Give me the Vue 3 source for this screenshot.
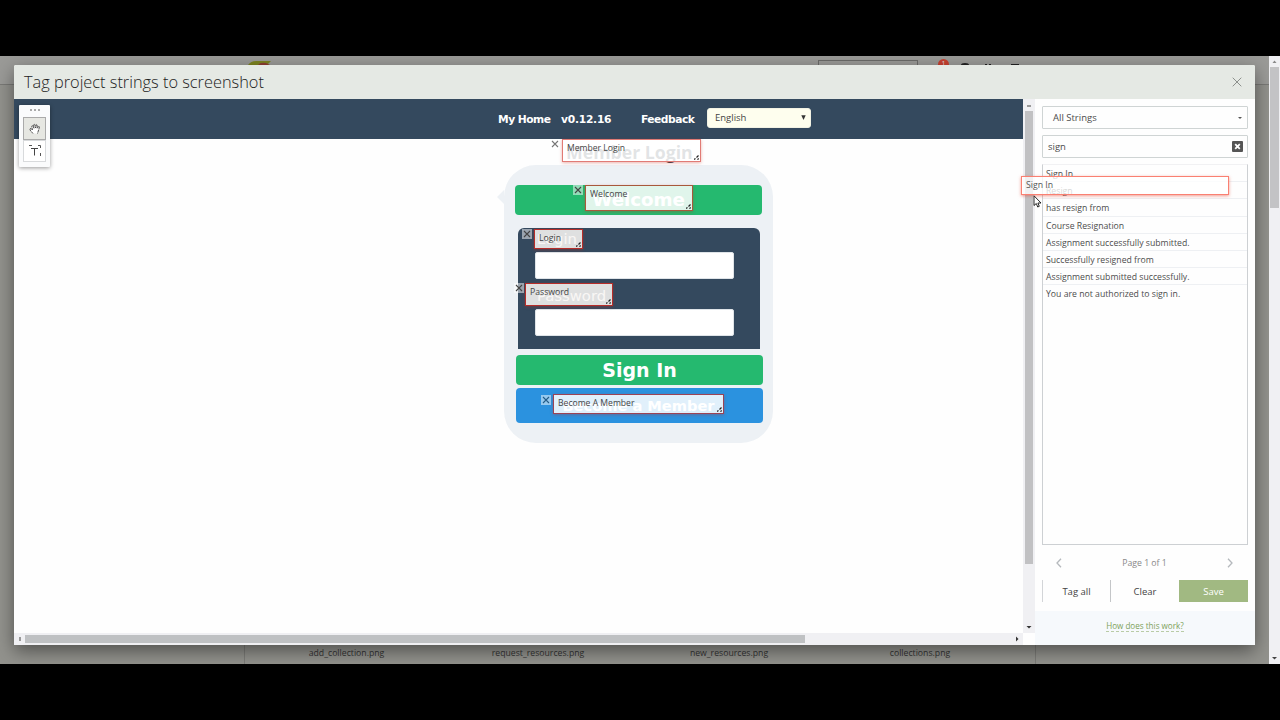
<script setup>
const strings = [
  'Sign In',
  'Resign',
  'has resign from',
  'Course Resignation',
  'Assignment successfully submitted.',
  'Successfully resigned from',
  'Assignment submitted successfully.',
  'You are not authorized to sign in.'
]
const files = ['add_collection.png', 'request_resources.png', 'new_resources.png', 'collections.png']
const tags = [
  { id: 'member', label: 'Member Login' },
  { id: 'welcome', label: 'Welcome' },
  { id: 'login', label: 'Login' },
  { id: 'password', label: 'Password' },
  { id: 'become', label: 'Become A Member' }
]
</script>

<template>
  <div class="screen">
    <div class="page">
      <div class="backdrop">
        <div class="topbar">
          <svg class="logo" width="26" height="9" viewBox="0 0 26 9"><path d="M1 9 Q4 5 9 5H24L20 9Z" fill="#7d8420" /><path d="M11 9 Q13 6 19 7L23 9Z" fill="#8e3c32" /></svg>
          <div class="search"></div>
          <div class="badge">1</div>
          <svg class="glyphs" width="62" height="9" viewBox="0 0 62 9"><path d="M3 9Q3 7 7 7T11 9ZM27 9V8H29V9ZM31 9V8H33V9ZM53 9V8H61V9Z" fill="#222" /></svg>
        </div>
        <div class="files"><span v-for="f in files" :key="f">{{ f }}</span></div>
      </div>
      <div class="page-scroll">
        <svg width="11" height="11" viewBox="0 0 11 11"><path d="M3.500 7H7.500L5.500 4.500Z" fill="#888" /></svg>
        <div class="page-thumb"></div>
        <svg width="11" height="12" viewBox="0 0 11 12"><path d="M3 5H8L5.500 7.500Z" fill="#444" /></svg>
      </div>
    </div>

    <section class="modal">
      <header class="head">
        <h1>Tag project strings to screenshot</h1>
        <svg width="10" height="10" viewBox="0 0 10 10"><path d="M.7.7 9.300 9.300M9.300.7.7 9.300" stroke="#8c908c" stroke-width="1" /></svg>
      </header>
      <div class="body">
        <div class="work">
          <div class="canvas">
            <nav class="nav">
              <span class="home">My Home</span><span class="ver">v0.12.16</span><span class="feed">Feedback</span>
              <div class="lang"><span>English</span><svg width="5" height="5" viewBox="0 0 5 5"><path d="M.3.300H4.700L2.500 5Z" fill="#333" /></svg></div>
            </nav>
            <h2>Member Login</h2>
            <div class="card">
              <svg class="nub" width="7" height="14" viewBox="0 0 7 14"><path d="M7 0V14L0 7Z" fill="#edf1f5" /></svg>
              <div class="btn welcome-btn">Welcome</div>
              <div class="form">
                <div class="lab lab-login">Login</div>
                <div class="field"></div>
                <div class="lab lab-pass">Password</div>
                <div class="field"></div>
              </div>
              <div class="btn sign-btn">Sign In</div>
              <div class="btn member-btn">Become a Member</div>
            </div>
            <div v-for="t in tags" :key="t.id" class="tag" :class="t.id">
              <i class="kill"><svg width="8" height="8" viewBox="0 0 8 8"><path d="M1 1 7 7M7 1 1 7" stroke="currentColor" stroke-width="1.100" /></svg></i>
              <span>{{ t.label }}</span>
              <svg class="grip" width="5" height="5" viewBox="0 0 5 5"><path d="M0 4.500 1.500 3.500M2.500 2.500 4.500 .5M3.500 4.700 4.700 3.500" stroke="#222" stroke-width="1.200" /></svg>
            </div>
            <div class="tools">
              <div class="dots"><b></b><b></b><b></b></div>
              <div class="tool on"><svg width="12" height="12" viewBox="0 0 12 12"><path d="M4 10.500 1 7V5.500L2.500 6 3.500 7 2.700 3.500Q3 2 4 3.200L5 5.200 4.600 1.800Q5.500.5 6 2L6.600 5 7.300 1.800Q8.300 1 8.200 2.700V5.300L9.700 3.300Q10.800 3.300 10.200 5L8.500 10.500" fill="#fff" stroke="#444" stroke-width=".9" stroke-dasharray="2.500 .5" /></svg></div>
              <div class="tool"><svg width="14" height="14" viewBox="0 0 14 14"><path d="M1 1.500H4M10 1.500H12.500V4M12.500 9V12" fill="none" stroke="#555" /><path d="M3 4.500H10M6.500 4.500V11.500" stroke="#444" fill="none" /></svg></div>
            </div>
          </div>
          <div class="vbar">
            <svg width="12" height="12" viewBox="0 0 12 12"><path d="M4 8H8V6H4Z" fill="#999" /></svg>
            <div class="vthumb"></div>
            <svg width="12" height="12" viewBox="0 0 12 12"><path d="M3.500 5H8.500L6 7.500Z" fill="#333" /></svg>
          </div>
          <div class="hbar">
            <svg width="11" height="12" viewBox="0 0 11 12"><path d="M5 4H7V8H5Z" fill="#999" /></svg>
            <div class="hthumb"></div>
            <svg width="12" height="12" viewBox="0 0 12 12"><path d="M5 3.500V8.500L7.500 6Z" fill="#333" /></svg>
          </div>
          <div class="corner"></div>
        </div>
        <aside class="side">
          <div class="box select"><span>All Strings</span><svg width="4" height="2" viewBox="0 0 4 2"><path d="M0 0H4L2 2Z" fill="#555" /></svg></div>
          <div class="box query"><span>sign</span><svg width="11" height="11" viewBox="0 0 11 11"><rect width="11" height="11" rx="1" fill="#555" /><path d="M3.200 3.200 7.800 7.800M7.800 3.200 3.200 7.800" stroke="#fff" stroke-width="1.800" /></svg></div>
          <div class="list"><div v-for="s in strings" :key="s">{{ s }}</div></div>
          <div class="pager">
            <svg width="6" height="10" viewBox="0 0 6 10"><path d="M5 .8 1 5 5 9.200" fill="none" stroke="#b5b9bd" stroke-width="1.300" /></svg>
            <span>Page 1 of 1</span>
            <svg width="6" height="10" viewBox="0 0 6 10"><path d="M1 .8 5 5 1 9.200" fill="none" stroke="#b5b9bd" stroke-width="1.300" /></svg>
          </div>
          <div class="actions"><div>Tag all</div><div>Clear</div><div class="save">Save</div></div>
          <footer class="foot"><span>How does this work?</span></footer>
        </aside>
      </div>
    </section>

    <div class="drag">Sign In</div>
    <svg class="cursor" width="9" height="13" viewBox="0 0 9 13"><path d="M1 .8V10.500L3.300 8.500 4.700 12 6.300 11.300 4.900 8H8Z" fill="#fff" stroke="#111" stroke-width=".9" /></svg>
  </div>
</template>

<style>
html, body { background: #000; overflow: hidden; }
</style>
<style scoped>
* { box-sizing: border-box; }
svg { display: block; flex: none; }
.screen { position: relative; width: 1280px; height: 720px; padding: 56px 0; background: #000; font: 8.700px/14px "Open Sans", sans-serif; color: #4c4c4c; overflow: hidden; white-space: nowrap; }
.page { height: 608px; display: flex; overflow: hidden; position: relative; }
.backdrop { width: 1269px; background: #92928d; display: flex; flex-direction: column; justify-content: space-between; }
.topbar { height: 29px; border-bottom: 1px solid #797976; position: relative; background: #9a9a97; }
.logo { position: absolute; left: 247px; top: 0; }
.search { position: absolute; left: 818px; top: 4px; width: 100px; height: 20px; border: 1px solid #6b6b69; }
.badge { position: absolute; left: 938px; top: 3px; width: 11px; height: 11px; border-radius: 50%; background: #c8402f; color: #ddd; font-size: 7px; line-height: 9px; text-align: center; }
.glyphs { position: absolute; left: 958px; top: 0; }
.files { height: 22px; margin-left: 244px; width: 792px; border: solid #7c7c78; border-width: 0 1px; display: grid; grid-template-columns: 203px 180px 202px 180px; color: #333; font-size: 8.700px; line-height: 22px; text-align: center; }
.page-scroll { width: 11px; background: #f0f0f3; display: flex; flex-direction: column; position: relative; z-index: 2; }
.page-thumb { width: 9px; height: 141px; margin: 0 1px auto; background: #c3c3c5; }

.modal { position: absolute; left: 14px; top: 65px; width: 1241px; height: 580px; border-radius: 2px; box-shadow: 0 6px 18px rgba(0,0,0,.45); background: #fefefe; }
.head { height: 34px; background: #e5e9e4; padding: 0 13px 0 10px; display: flex; align-items: center; justify-content: space-between; border-radius: 2px 2px 0 0; }
h1 { margin: 0; font: 300 16.350px/34px "Open Sans", sans-serif; color: #222; }
.body { height: 546px; display: flex; }
.work { width: 1021px; display: grid; grid-template-columns: 1009px 12px; grid-template-rows: 534px 12px; }
.canvas { position: relative; background: #fefefe; overflow: hidden; }
.vbar, .hbar { background: #f0f0f3; display: flex; }
.vbar { flex-direction: column; }
.vthumb { width: 8px; height: 453px; margin: 0 2px auto; background: #c1c1c3; }
.hthumb { width: 780px; height: 8px; margin: 2px auto 0 0; background: #bfc1c3; }
.corner { background: #fefefe; }

.nav { height: 40px; background: #34495e; display: flex; align-items: center; color: #fff; font: bold 10.700px/14px "DejaVu Sans", sans-serif; letter-spacing: -.5px; padding: 1px 0 0 484px; }
.home { width: 63px; }
.ver { width: 80px; letter-spacing: -.25px; }
.feed { width: 66px; }
.lang { width: 104px; height: 20px; margin-top: -4px; background: #fefeee; border-radius: 3px; border: 1px solid #f2f2e4; display: flex; align-items: center; justify-content: space-between; padding: 0 4px 0 7px; color: #444; font: 9.500px/18px "Open Sans", sans-serif; letter-spacing: 0; }
h2 { height: 26px; margin: 0; padding-left: 552px; font: bold 17.700px/27px "Open Sans", sans-serif; color: #32404c; }
.card { position: relative; width: 269px; height: 278px; margin-left: 490px; padding: 20px 11px; border-radius: 32px; background: #edf1f5; display: flex; flex-direction: column; }
.nub { position: absolute; left: -7px; top: 25px; }
.btn { width: 247px; border-radius: 4px; display: flex; align-items: center; justify-content: center; color: #fff; font: bold 18.200px/30px "DejaVu Sans", sans-serif; }
.welcome-btn { height: 30px; background: #25b96f; }
.sign-btn { height: 30px; margin: 6px 0 3px 1px; background: #25b96f; font-size: 19px; line-height: 28px; padding-bottom: 1px; }
.member-btn { height: 35px; margin-left: 1px; background: #2b92df; font-size: 14.600px; padding-right: 2px; }
.form { width: 242px; height: 121px; margin: 13px 0 0 3px; padding: 0 26px 0 17px; background: #34495e; border-radius: 6px 6px 0 0; color: #fff; font: 14.800px/22px "DejaVu Sans", sans-serif; }
.lab-login { height: 24px; padding-left: 2px; }
.lab-pass { height: 30px; padding-top: 6px; padding-left: 2px; }
.field { height: 27px; width: 199px; background: #fff; border: 1px solid #dfe4e8; border-radius: 2px; }

.tag { position: absolute; border: 1px solid #ad3d3a; background: rgba(255,255,255,.86); box-shadow: 0 1px 3px rgba(200,40,30,.35); padding-left: 4px; color: #444; font-size: 8.700px; line-height: 17px; }
.kill { position: absolute; right: 100%; top: -1px; margin-right: 3px; width: 10px; height: 10px; display: flex; align-items: center; justify-content: center; color: #444; background: rgba(255,255,255,.5); }
.grip { position: absolute; right: 1px; bottom: 1px; }
.member { left: 548px; top: 40px; width: 139px; height: 23px; border-color: #e17b75; }
.member .kill { color: #777; }
.welcome { left: 571px; top: 86px; width: 108px; height: 26px; border-color: #a7593b; }
.login { left: 520px; top: 130px; width: 49px; height: 20px; border-color: #b62d29; background: rgba(247,245,243,.88); }
.password { left: 511px; top: 184px; width: 88px; height: 23px; border-color: #b62d29; background: rgba(247,245,243,.88); }
.password .kill { margin-right: 2px; }
.become { left: 539px; top: 295px; width: 171px; height: 20px; border-color: #9c4354; }
.become .kill { color: #235d88; top: 0; }
.member span, .become span { font-size: 8.600px; }
.tools { position: absolute; left: 5px; top: 6px; width: 31px; height: 62px; background: #fafbfc; box-shadow: 0 1px 4px rgba(0,0,0,.4); border-radius: 1px; padding: 4px 4px; }
.dots { height: 8px; display: flex; gap: 2px; justify-content: center; }
.dots b { width: 2px; height: 2px; background: #aaa; }
.tool { width: 23px; height: 22px; border: 1px solid #d8dadc; display: flex; align-items: center; justify-content: center; background: #fff; }
.on { background: #e6e7e2; border-color: #aaa; height: 23px; }

.side { width: 220px; padding: 7px 0 0; display: flex; flex-direction: column; background: #fefefe; }
.box { width: 206px; height: 23px; margin-left: 7px; border: 1px solid #cfd4d4; border-radius: 1px; display: flex; align-items: center; justify-content: space-between; font-size: 9.500px; }
.select { padding: 0 5px 0 10px; }
.query { margin-top: 6px; padding: 0 4px 0 5px; }
.list { margin: 6px 0 0 7px; width: 206px; height: 381px; border: 1px solid #cdd0d3; border-top-color: #f1f1f3; padding: 0; }
.list div { height: 17.200px; line-height: 19px; padding-left: 3px; border-bottom: 1px solid #eef0f3; }
.list div:last-child { border: 0; }
.pager { height: 35px; padding: 0 22px 0 21px; display: flex; align-items: center; justify-content: space-between; color: #888; }
.actions { width: 206px; margin-left: 7px; height: 24px; display: grid; grid-template-columns: 68px 69px 69px; line-height: 24px; text-align: center; font-size: 9.500px; color: #444; }
.actions div { border-left: 1px solid #d3d5d8; height: 22px; }
.actions div:nth-child(2) { border-left-color: #c4c6c8; }
.actions .save { background: #a1b982; color: #fff; border: 0; }
.foot { margin-top: auto; height: 34px; background: #f6f9fc; display: flex; justify-content: center; align-items: center; color: #7da159; font-size: 8.100px; border-radius: 0 0 2px; }
.foot span { border-bottom: 1px dashed #b9cba6; line-height: 11px; margin-top: -4px; }
.drag { position: absolute; left: 1021px; top: 176px; width: 208px; height: 19px; border: 1px solid #fa8072; background: rgba(255,255,255,.78); padding-left: 4px; line-height: 17px; box-shadow: 0 1px 3px rgba(230,60,40,.5); color: #555; }
.cursor { position: absolute; left: 1033px; top: 195px; }
</style>
